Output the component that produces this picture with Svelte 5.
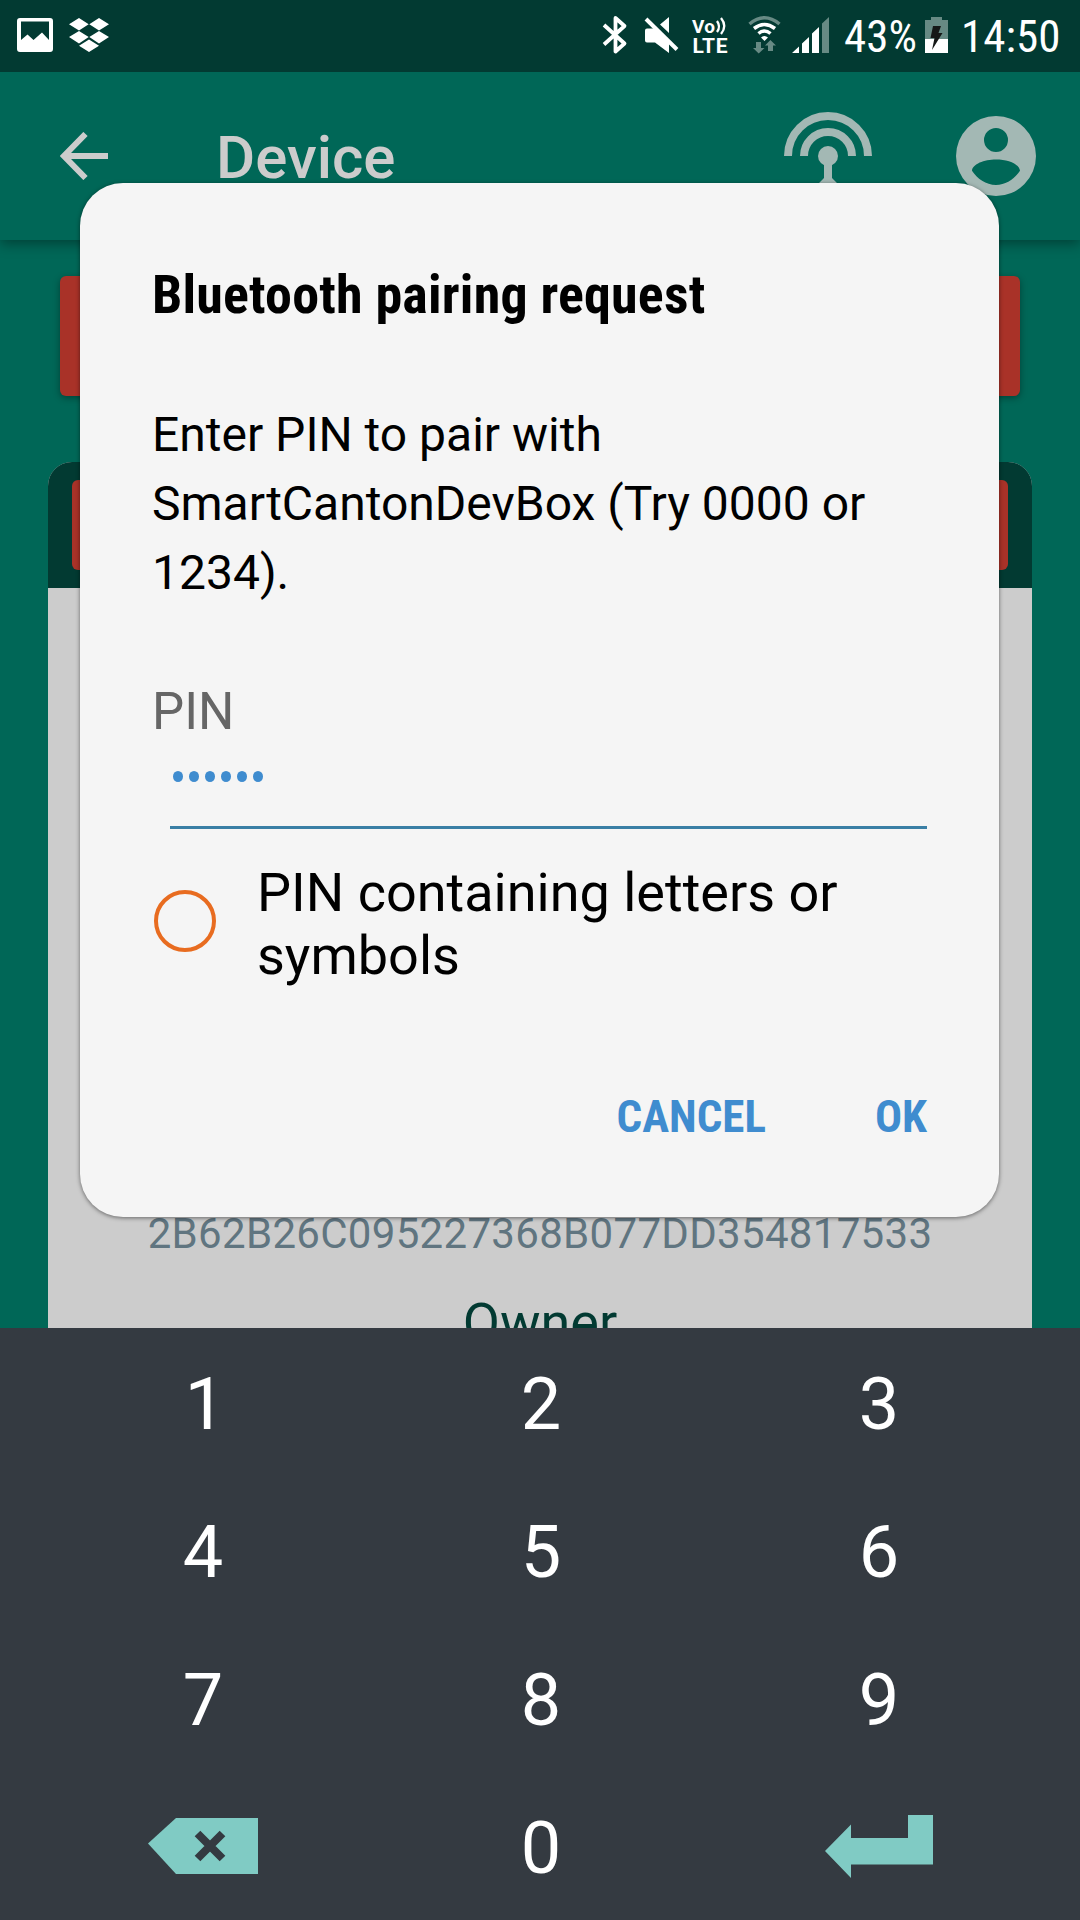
<script>
  const keys = ['1', '2', '3', '4', '5', '6', '7', '8', '9'];
  const pinLength = 6;
</script>

<div class="screen">
  <header class="status">
    <div class="left">
      <svg width="36" height="34" viewBox="0 0 36 34">
        <path fill="#fff" fill-rule="evenodd" d="M3 0H33a3 3 0 0 1 3 3V31a3 3 0 0 1-3 3H3a3 3 0 0 1-3-3V3a3 3 0 0 1 3-3ZM4 3.5V22L10.500 16.500L16.500 22L25 14.500L32 22V3.500Z" />
      </svg>
      <svg width="40" height="34" viewBox="0 0 40 34">
        <path fill="#fff" d="M10 0L19.700 6.300L10 12.600L0 6.300ZM30 0L40 6.300L30 12.600L20.300 6.300ZM10 13L19.700 19L10 25.500L0 19ZM30 13L40 19L30 25.500L20.300 19ZM20 21.500L30 27.700L20 34L10 27.700Z" />
      </svg>
    </div>
    <svg class="indicators" width="249" height="72" viewBox="580 0 249 72">
      <path fill="none" stroke="#fff" stroke-width="3.800" stroke-linejoin="round" d="M604 25L624.500 43.500L615.500 51.500V18L624.500 26L604 44.500" />
      <path fill="#fff" d="M645 30.500a2 2 0 0 1 2-2H656L669 41V53L655 42.500H647a2 2 0 0 1-2-2ZM669 17V33L660 24.500Z" />
      <path stroke="#023a32" stroke-width="3" d="M647 16L680 48" />
      <path stroke="#fff" stroke-width="4" d="M646 19L677 49.500" />
      <text class="vo" x="692" y="32.500" textLength="23">Vo</text>
      <text class="vo lte" x="692.500" y="52.500" textLength="35">LTE</text>
      <path fill="none" stroke="#fff" stroke-width="2.300" d="M717 21q4 5.500 0 11M721 18q6.500 8 0 16" />
      <g fill="none" stroke="#fff" stroke-width="3.500">
        <path stroke="#678a84" d="M749.500 24Q764.500 11.500 779.500 24" />
        <path d="M754 28.500Q764.500 20.500 775 28.500M758.500 33.500Q764.500 28.500 770.500 33.500" />
      </g>
      <path fill="#fff" d="M761 37.500Q764.500 34.500 768 37.500L764.500 41Z" />
      <path fill="#678a84" d="M756 42H761V48H764.500L758.700 53.500L753 48H756ZM768 51H773V45.500H776L770.400 40L765 45.500H768Z" />
      <path fill="#fff" d="M792 53L799 46.500V53ZM802 43.500L809 37V53H802ZM812 33.500L819 27V53H812Z" />
      <path fill="#678a84" d="M822 23.500L829 17V53H822Z" />
    </svg>
    <span class="percent">43%</span>
    <svg class="battery" width="23" height="36" viewBox="0 0 23 36">
      <path fill="#678a84" d="M6 0H17V3H23V22H0V3H6Z" />
      <path fill="#fff" d="M0 22H23V36H0Z" />
      <path fill="#151817" d="M8 9H16L13.500 16H17.500L7 33L9.500 21H5.500Z" />
    </svg>
    <span class="clock">14:50</span>
  </header>

  <main>
    <nav>
      <svg class="back" width="48" height="48" viewBox="0 0 48 48">
        <path fill="none" stroke="#ccc" stroke-width="6" d="M25.500 2L4 24L25.500 46M4 24H48" />
      </svg>
      <h1>Device</h1>
      <svg class="antenna" width="88" height="88" viewBox="0 0 88 88">
        <path fill="none" stroke="#a3b8b4" stroke-width="8" d="M4 44a40 40 0 0 1 80 0M20 44a24 24 0 0 1 48 0" />
        <circle cx="44" cy="44" r="10" fill="#a3b8b4" />
        <path fill="#a3b8b4" d="M40 50H48V66L62 80L56 86L44 74L32 86L26 80L40 66Z" />
      </svg>
      <svg class="account" width="80" height="80" viewBox="0 0 80 80">
        <path fill="#a3b8b4" fill-rule="evenodd" d="M40 0a40 40 0 1 0 0 80a40 40 0 1 0 0-80ZM40 12a12 12 0 1 1 0 24a12 12 0 1 1 0-24ZM16 54.800C16.500 48 28 43.500 40 43.500S63.500 48 64 54.800C59 62.500 50 69 40 69S21 62.500 16 54.800Z" />
      </svg>
    </nav>
    <div class="banner"></div>
    <section class="card">
      <div class="card-head"><div class="alert"></div></div>
      <div class="card-body">
        <p class="hash">2B62B26C095227368B077DD354817533</p>
        <p class="owner">Owner</p>
      </div>
    </section>

    <div class="dialog">
      <h2><span>Bluetooth pairing request</span></h2>
      <p class="message">Enter PIN to pair with<br />SmartCantonDevBox (Try 0000 or<br />1234).</p>
      <div class="label">PIN</div>
      <div class="field">
        {#each Array(pinLength) as _}<i></i>{/each}
      </div>
      <div class="option">
        <span class="radio"></span>
        <span>PIN containing letters or<br />symbols</span>
      </div>
      <div class="actions"><span>CANCEL</span><span>OK</span></div>
    </div>
  </main>

  <footer>
    {#each keys as key}<div class="key" class:one={key === '1'}>{key}</div>{/each}
    <div class="key icon">
      <svg width="112" height="56" viewBox="0 0 112 56">
        <path fill="#80cbc4" d="M1 25.500L29 0H111V56H29Z" />
        <path stroke="#343a41" stroke-width="8" d="M50.500 15.500L75.500 40.500M75.500 15.500L50.500 40.500" />
      </svg>
    </div>
    <div class="key">0</div>
    <div class="key icon">
      <svg width="108" height="63" viewBox="0 0 108 63">
        <path fill="#80cbc4" d="M0 36L26 9.500V23H83V0H108V49.500H26V63Z" />
      </svg>
    </div>
  </footer>
</div>

<style>
  :global(body) { margin: 0; }
  .screen {
    width: 1080px;
    height: 1920px;
    display: flex;
    flex-direction: column;
    overflow: hidden;
    font-family: Roboto, "Liberation Sans", sans-serif;
    background: #006757;
  }
  h1, h2, p { margin: 0; font-weight: 400; }
  svg { display: block; flex: none; }

  .status {
    height: 72px;
    flex: none;
    display: flex;
    align-items: center;
    background: #023a32;
    color: #fff;
    position: relative;
  }
  .left { display: flex; gap: 16px; margin-left: 17px; width: 563px; margin-top: -2px; }
  .percent, .clock {
    font-family: "Roboto Condensed", Roboto, sans-serif;
    font-stretch: 75%;
    font-size: 45px;
    line-height: 72px;
    padding-top: 2px;
    white-space: nowrap;
  }
  .percent { margin-left: 15px; width: 81px; }
  .clock { margin-left: 13px; }
  .battery { margin-top: -2px; }
  .vo { font: 700 19px Roboto, sans-serif; fill: #fff; }
  .lte { font-size: 21px; }

  main { flex: 1; min-height: 0; position: relative; overflow: hidden; }
  nav {
    height: 168px;
    display: flex;
    align-items: flex-start;
    box-shadow: 0 4px 12px rgba(0, 0, 0, .36);
  }
  .back { margin: 60px 0 0 60px; }
  h1 { font-size: 60px; line-height: 70px; font-weight: 500; color: #ccc; margin: 51px 0 0 108px; width: 568px; }
  .antenna { margin-top: 40px; }
  .account { margin: 44px 0 0 84px; }
  .banner {
    height: 120px;
    margin: 36px 60px 66px;
    border-radius: 6px;
    background: #a93228;
    box-shadow: 0 2px 7px rgba(0, 0, 0, .36);
  }
  .card { margin: 0 48px; height: 900px; border-radius: 24px 24px 0 0; overflow: hidden; background: #ccc; }
  .card-head { background: #023a32; padding: 18px 24px; }
  .alert { height: 90px; border-radius: 6px; background: #a93228; }
  .card-body { text-align: center; padding-top: 621px; }
  .hash { font-size: 42px; line-height: 50px; letter-spacing: .31px; color: #607580; white-space: nowrap; }
  .owner { font-size: 54px; line-height: 64px; color: #023a32; margin-top: 32px; }

  .dialog {
    position: absolute;
    left: 80px;
    top: 111px;
    width: 919px;
    height: 1034px;
    box-sizing: border-box;
    padding: 80px 72px 0;
    border-radius: 43px;
    background: #f5f5f5;
    box-shadow: 0 1px 4px rgba(0, 0, 0, .5);
    color: #000;
  }
  h2 {
    font-family: "Roboto Condensed", Roboto, sans-serif;
    font-stretch: 75%;
    font-size: 54px;
    line-height: 64px;
    font-weight: 700;
    letter-spacing: .2px;
    white-space: nowrap;
  }
  .message { font-size: 48px; line-height: 69px; margin-top: 73px; white-space: nowrap; }
  .label { font-size: 51px; line-height: 60px; margin-top: 75px; color: #666; }
  .field {
    height: 84px;
    margin-left: 18px;
    border-bottom: 3px solid #3a7fa5;
    display: flex;
    gap: 6px;
    padding: 0 3px;
  }
  .field i { width: 10px; height: 11px; border-radius: 50%; background: #3f8ccf; margin-top: 29px; }
  .option { display: flex; align-items: flex-start; margin-top: 32px; font-size: 54px; line-height: 63px; white-space: nowrap; }
  .radio {
    width: 62px;
    height: 62px;
    box-sizing: border-box;
    border: 4px solid #e86c20;
    border-radius: 50%;
    margin: 29px 41px 0 2px;
  }
  .actions {
    display: flex;
    justify-content: flex-end;
    gap: 109px;
    margin-top: 104px;
    font-family: "Roboto Condensed", Roboto, sans-serif;
    font-stretch: 75%;
    font-size: 45px;
    line-height: 52px;
    font-weight: 700;
    color: #3f8ccf;
  }

  footer {
    height: 592px;
    flex: none;
    box-sizing: border-box;
    padding: 0 32px 0 34px;
    display: grid;
    grid-template-columns: repeat(3, 1fr);
    grid-template-rows: repeat(4, 148px);
    background: #343a41;
    position: relative;
  }
  .key {
    box-sizing: border-box;
    height: 148px;
    padding-top: 5px;
    display: flex;
    align-items: center;
    justify-content: center;
    font-size: 72px;
    line-height: 84px;
    color: #fff;
  }
  .one { padding-left: 4px; }
  .icon { padding-top: 0; }
</style>
